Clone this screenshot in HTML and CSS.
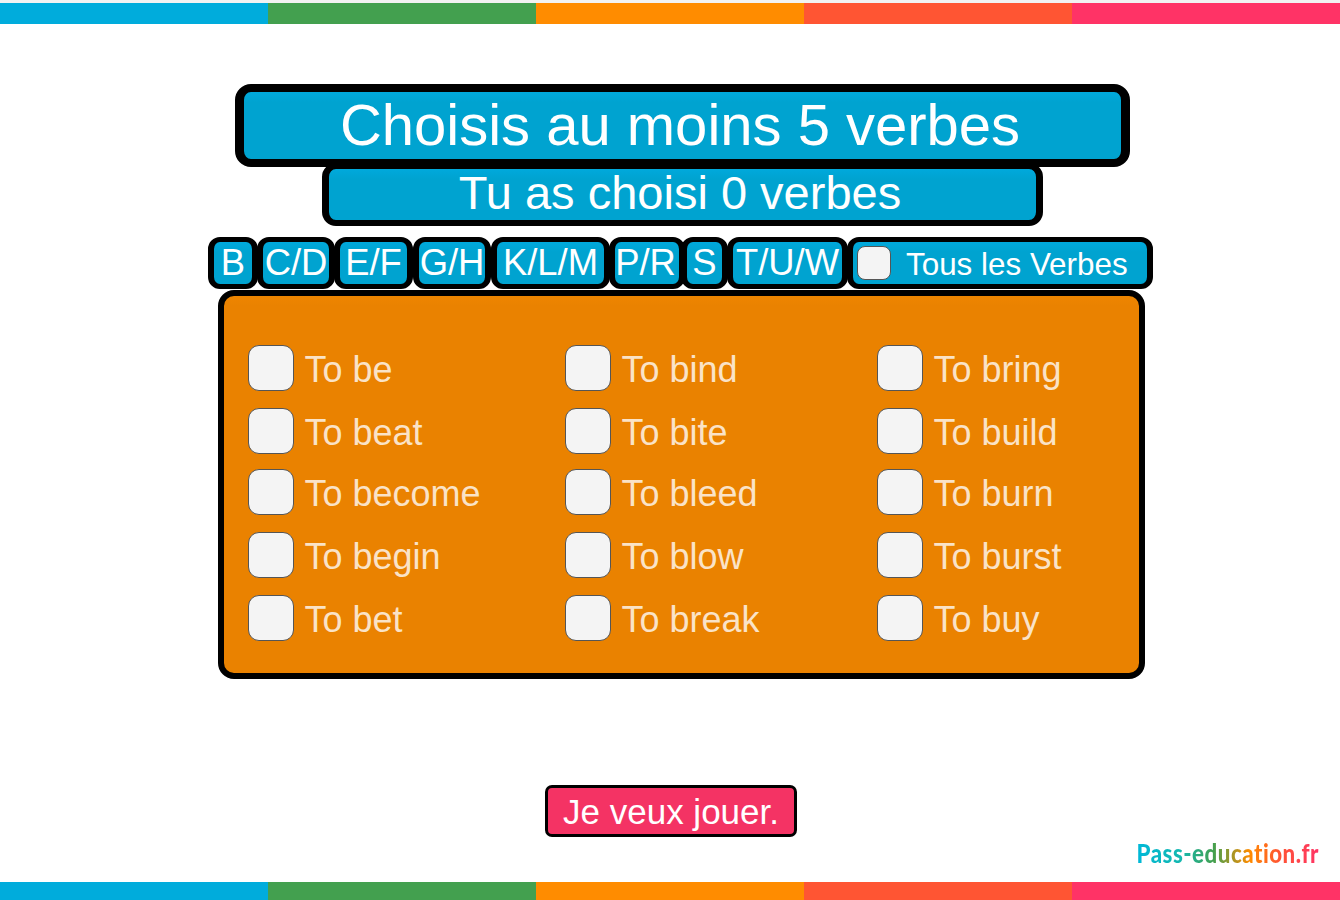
FILE: index.html
```html
<!DOCTYPE html>
<html>

<head>
  <meta charset="utf-8" />
  <meta name="viewport" content="width=device-width, initial-scale=1" />
  <title>Choisis au moins 5 verbes</title>
  <link rel="stylesheet" href="styles.css">
</head>

<body>
  <div class="strip strip-top">
    <span class="blue"></span><span class="green"></span><span class="orange"></span><span class="red"></span><span class="pink"></span>
  </div>

  <div class="stage">
    <h1 class="title">Choisis au moins 5 verbes</h1>
    <h2 class="subtitle">Tu as choisi 0 verbes</h2>

    <!-- letter filters -->
    <div class="tabs">
      <button class="tab tab-b">B</button>
      <button class="tab tab-cd">C/D</button>
      <button class="tab tab-ef">E/F</button>
      <button class="tab tab-gh">G/H</button>
      <button class="tab tab-klm">K/L/M</button>
      <button class="tab tab-pr">P/R</button>
      <button class="tab tab-s">S</button>
      <button class="tab tab-tuw">T/U/W</button>
      <label class="tab tab-all"><input type="checkbox" class="check check-small"><span class="all-text">Tous les Verbes</span></label>
    </div>

    <!-- verb list -->
    <div class="panel">
      <label class="verb"><input type="checkbox" class="check"><span class="verb-text">To be</span></label>
      <label class="verb"><input type="checkbox" class="check"><span class="verb-text">To bind</span></label>
      <label class="verb"><input type="checkbox" class="check"><span class="verb-text">To bring</span></label>
      <label class="verb"><input type="checkbox" class="check"><span class="verb-text">To beat</span></label>
      <label class="verb"><input type="checkbox" class="check"><span class="verb-text">To bite</span></label>
      <label class="verb"><input type="checkbox" class="check"><span class="verb-text">To build</span></label>
      <label class="verb"><input type="checkbox" class="check"><span class="verb-text">To become</span></label>
      <label class="verb"><input type="checkbox" class="check"><span class="verb-text">To bleed</span></label>
      <label class="verb"><input type="checkbox" class="check"><span class="verb-text">To burn</span></label>
      <label class="verb"><input type="checkbox" class="check"><span class="verb-text">To begin</span></label>
      <label class="verb"><input type="checkbox" class="check"><span class="verb-text">To blow</span></label>
      <label class="verb"><input type="checkbox" class="check"><span class="verb-text">To burst</span></label>
      <label class="verb"><input type="checkbox" class="check"><span class="verb-text">To bet</span></label>
      <label class="verb"><input type="checkbox" class="check"><span class="verb-text">To break</span></label>
      <label class="verb"><input type="checkbox" class="check"><span class="verb-text">To buy</span></label>
    </div>
  </div>

  <button class="play">Je veux jouer.</button>
  <div class="logo">Pass-education.fr</div>

  <div class="strip strip-bottom">
    <span class="blue"></span><span class="green"></span><span class="orange"></span><span class="red"></span><span class="pink"></span>
  </div>
</body>

</html>
```

FILE: styles.css
```css
* {
  box-sizing: border-box;
}

html,
body {
  height: 100%;
}

body {
  margin: 0;
  background: white;
  color: white;
  font-family: "Liberation Sans", Arial, sans-serif;
  display: flex;
  flex-direction: column;
  overflow: hidden;
}

/* coloured strips */
.strip {
  display: flex;
  flex-shrink: 0;
}

.strip span {
  flex: 1;
}

.strip-top {
  height: 24px;
  border-top: 3px solid #f2f2f2;
}

.strip-bottom {
  height: 18px;
  margin-top: auto;
}

.blue {
  background: #00acdc;
}

.green {
  background: #43a04f;
}

.orange {
  background: #ff8c00;
}

.red {
  background: #ff5533;
}

.pink {
  background: #ff3366;
}

/* main column */
.stage {
  width: 945px;
  margin: 60px 0 0 208px;
  display: flex;
  flex-direction: column;
  align-items: center;
}

.title,
.subtitle,
.tab {
  background: linear-gradient(#00a9dc 0, #00a3d0 10px);
  border: solid black;
  font-weight: normal;
}

.title {
  width: 895px;
  height: 83px;
  margin: 0 0 0 4px;
  padding-right: 5px;
  border-width: 8px 9px;
  border-radius: 16px;
  font-size: 58px;
  line-height: 65px;
  text-align: center;
}

.subtitle {
  width: 721px;
  height: 63px;
  margin: -4px 0 0 4px;
  padding-right: 5px;
  border-width: 6px 7px;
  border-radius: 14px;
  font-size: 47px;
  line-height: 48px;
  text-align: center;
}

/* filter tabs */
.tabs {
  display: flex;
  width: 100%;
  height: 52px;
  margin-top: 11px;
}

.tab {
  height: 52px;
  margin-right: -1px;
  padding: 0;
  border-width: 5px 6px;
  border-radius: 12px;
  color: white;
  font-family: inherit;
  font-size: 36.4px;
  line-height: 40px;
  flex-shrink: 0;
}

.tab-b {
  width: 50px;
}

.tab-cd {
  width: 78px;
}

.tab-ef {
  width: 79px;
  margin-right: 0;
}

.tab-gh {
  width: 78px;
  margin-right: 0;
}

.tab-klm {
  width: 119px;
}

.tab-pr {
  width: 76px;
  margin-right: -4px;
  padding-right: 3px;
}

.tab-s {
  width: 47px;
}

.tab-tuw {
  width: 121px;
}

.tab-all {
  width: 306px;
  display: flex;
  align-items: center;
  gap: 15px;
  padding-left: 4px;
  font-size: 31.4px;
}

.all-text {
  margin-top: 3px;
}

/* checkboxes */
.check {
  appearance: none;
  width: 46px;
  height: 46px;
  margin: 0 11px 0 0;
  background: #f4f4f4;
  border: 1.5px solid #555;
  border-radius: 11px;
  flex-shrink: 0;
}

.check-small {
  width: 34px;
  height: 34px;
  margin: 0;
  border-radius: 8px;
}

/* verb panel */
.panel {
  width: 927px;
  height: 389px;
  margin: 1px 0 0 1px;
  padding: 49px 0 0 24px;
  background: linear-gradient(#ee8500 0, #ea8200 10px);
  border: 6px solid black;
  border-radius: 16px;
  display: grid;
  grid-template-columns: 317px 312px 1fr;
  grid-template-rows: 63px 61px 63px 63px 46px;
}

.verb {
  display: flex;
  align-items: center;
  align-self: start;
  height: 46px;
  font-size: 36px;
  color: rgba(255, 255, 255, 0.78);
}

.verb-text {
  margin-top: 3px;
}

/* play button */
.play {
  align-self: flex-start;
  width: 252px;
  height: 52px;
  margin: 106px 0 0 545px;
  padding: 2px 0 0;
  background: #f43364;
  border: 3px solid black;
  border-radius: 7px;
  color: white;
  font-family: inherit;
  font-size: 35px;
  flex-shrink: 0;
}

/* logo */
.logo {
  align-self: flex-end;
  margin: 1px 21px 0 0;
  font-family: Lato, sans-serif;
  font-weight: 900;
  font-size: 22.3px;
  line-height: 30px;
  letter-spacing: 0.5px;
  transform: scaleY(1.2);
  background: linear-gradient(90deg, #00b8d8 0, #14b8b0 24%, #43a04f 42%, #ff8c00 62%, #ff5533 78%, #ff3366 100%);
  -webkit-background-clip: text;
  background-clip: text;
  color: transparent;
}
```
